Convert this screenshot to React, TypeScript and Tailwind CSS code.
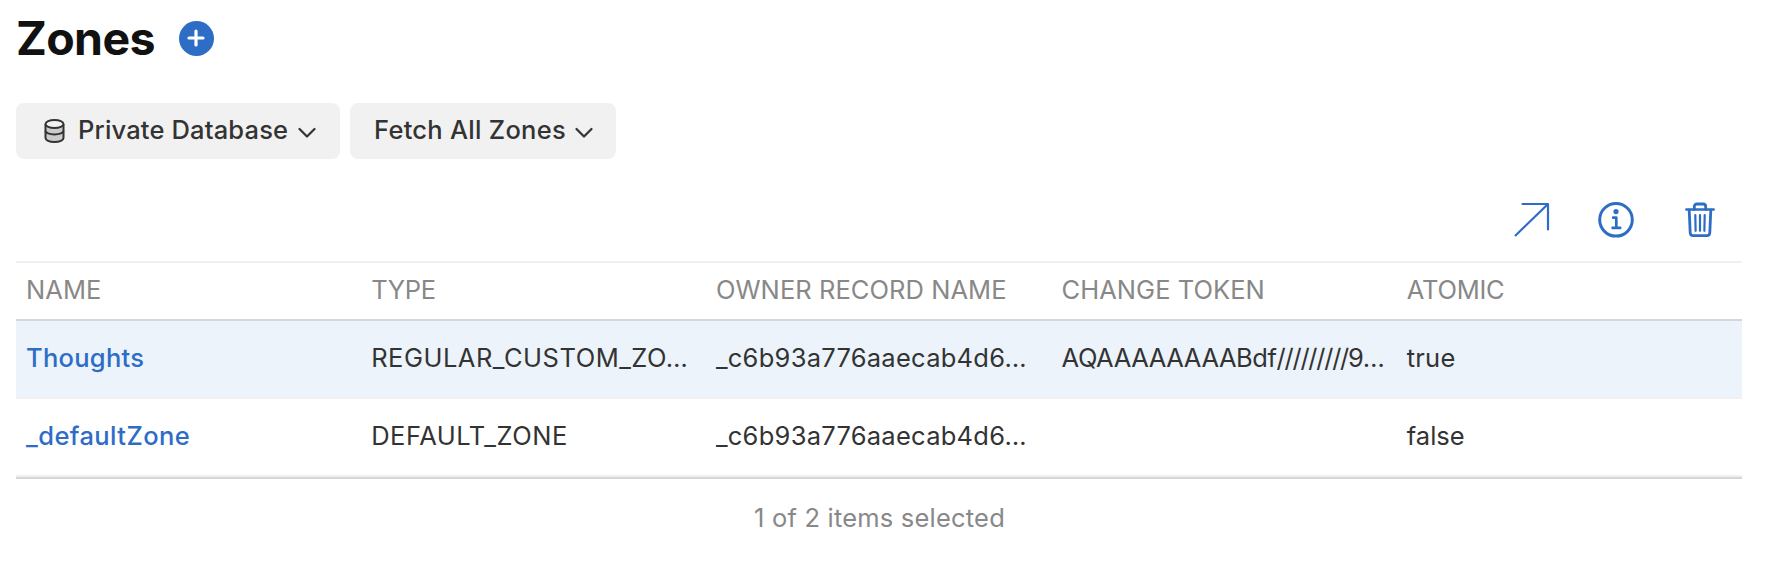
import type { ReactNode } from "react";

type Cell = { text: ReactNode; style: string };
type Zone = { name: Cell; cells: Cell[]; selected: boolean };

const columns: Cell[] = [
  { text: "NAME", style: "pl-[10px] tracking-[0.05px]" },
  { text: "TYPE", style: "pl-[10px] tracking-[-0.35px]" },
  { text: "OWNER RECORD NAME", style: "pl-[9.5px] tracking-[0.05px]" },
  { text: "CHANGE TOKEN", style: "pl-[10px] tracking-[0.03px]" },
  { text: "ATOMIC", style: "pl-[10px] tracking-[-0.25px]" },
];

const zones: Zone[] = [
  {
    name: { text: "Thoughts", style: "pl-[10px] tracking-[0.28px]" },
    selected: true,
    cells: [
      { text: "REGULAR_CUSTOM_ZO…", style: "pl-[10px] tracking-[0.5px]" },
      { text: "_c6b93a776aaecab4d6…", style: "pl-[9.5px] tracking-[0.26px]" },
      {
        text: (
          <>
            AQAAAAAAAABdf<span className="tracking-[-1.25px]">/////////</span>9…
          </>
        ),
        style: "pl-[10px] tracking-[-0.42px]",
      },
      { text: "true", style: "pl-[10px] tracking-[0.19px]" },
    ],
  },
  {
    name: { text: "_defaultZone", style: "pl-[10px] tracking-[0.42px]" },
    selected: false,
    cells: [
      { text: "DEFAULT_ZONE", style: "pl-[10px] tracking-[0.52px]" },
      { text: "_c6b93a776aaecab4d6…", style: "pl-[9.5px] tracking-[0.26px]" },
      { text: "", style: "" },
      { text: "false", style: "pl-[10px]" },
    ],
  },
];

function DatabaseIcon() {
  return (
    <svg width="21" height="24" viewBox="0 0 21 24" fill="none" stroke="#333" strokeWidth="2">
      <path d="M1.500 5v14c0 2.200 3.800 4 9 4s9-1.800 9-4V5" fill="#cbcbcb" />
      <ellipse cx="10.500" cy="5" rx="9" ry="4" fill="#f1f1f1" />
      <path d="M1.500 11.800c0 2 3.800 3.600 9 3.600s9-1.600 9-3.600" />
    </svg>
  );
}

function Chevron() {
  return (
    <svg width="18" height="12" viewBox="0 0 18 12" fill="none" stroke="#333" strokeWidth="2.200" strokeLinecap="round" strokeLinejoin="round">
      <path d="M1.500 2 9 9.500 16.500 2" />
    </svg>
  );
}

function ArrowIcon() {
  return (
    <svg width="36" height="36" viewBox="0 0 36 36" fill="none" stroke="#2d6dc6" strokeWidth="2.200">
      <path d="M8.500 2H34v25.500" strokeLinecap="round" strokeLinejoin="round" />
      <path d="M34 2 1 34" />
    </svg>
  );
}

function InfoIcon() {
  return (
    <svg width="36" height="36" viewBox="0 0 36 36" fill="none" stroke="#2d6dc6" strokeWidth="3">
      <circle cx="18" cy="17.800" r="16.300" />
      <circle cx="18" cy="9.600" r="2.600" fill="#2d6dc6" stroke="none" />
      <path d="M15.200 15.700h3.100v10.200M14.600 25.900h7.600" strokeWidth="2.700" strokeLinecap="round" strokeLinejoin="round" />
    </svg>
  );
}

function TrashIcon() {
  return (
    <svg width="32" height="36" viewBox="0 0 32 36" fill="none" stroke="#2d6dc6" strokeWidth="2.800" strokeLinecap="round" strokeLinejoin="round">
      <path d="M2.400 7.600h27.200" strokeWidth="2.500" />
      <path d="M10.300 7.500V4.700c0-1.700 1-2.700 2.700-2.700h6c1.700 0 2.700 1 2.700 2.700v2.800" />
      <path d="M5.200 8.200l1 22.600c.1 1.900 1.100 2.900 2.900 2.900h13.800c1.800 0 2.800-1 2.900-2.900l1-22.600" />
      <path d="M11.300 13l.3 15.800M16 13v15.800M20.700 13l-.3 15.800" strokeWidth="2.200" />
    </svg>
  );
}

function Dropdown({ className, children }: { className: string; children: ReactNode }) {
  return (
    <button className={`flex h-14 items-center rounded-lg bg-[#f1f1f1] font-medium leading-[53px] text-[#333] ${className}`}>
      {children}
    </button>
  );
}

export default function App() {
  return (
    <main className="h-[566px] overflow-hidden whitespace-nowrap bg-white pl-4 pr-[26px] font-[Inter,sans-serif] text-[25.5px] text-[#333]">
      <header className="flex h-[76px] items-center">
        <h1 className="w-[162.5px] text-[46.5px] font-bold leading-[76px] tracking-[-0.64px] text-[#111]">Zones</h1>
        <button aria-label="Add zone" className="flex size-[35px] items-center justify-center rounded-full bg-[#2d6dc6]">
          <svg width="18" height="18" viewBox="0 0 18 18" stroke="#fff" strokeWidth="3.200" strokeLinecap="round">
            <path d="M9 2v14M2 9h14" />
          </svg>
        </button>
      </header>

      <div className="mt-[27px] flex gap-[10px]">
        <Dropdown className="w-[324px] pl-7">
          <DatabaseIcon />
          <span className="ml-[13px] mr-[9px] h-14 w-[210.5px] text-left tracking-[0.17px]">Private Database</span>
          <span className="mt-1"><Chevron /></span>
        </Dropdown>
        <Dropdown className="w-[266px] pl-[24px]">
          <span className="mr-[9px] h-14 w-[192px] text-left tracking-[0.27px]">Fetch All Zones</span>
          <span className="mt-1"><Chevron /></span>
        </Dropdown>
      </div>

      <div className="flex h-[102px] items-start justify-end pr-[26px] pt-[43px] text-[#2d6dc6]">
        <button aria-label="Open" className="mr-[48px]"><ArrowIcon /></button>
        <button aria-label="Info" className="mr-[50px]"><InfoIcon /></button>
        <button aria-label="Delete"><TrashIcon /></button>
      </div>

      <section>
        <div className="grid h-[60px] grid-cols-5 border-y-2 border-t-[#f0f0f0] border-b-[#d6d6d6] leading-[54px] text-[#888]">
          {columns.map((c, i) => (
            <div key={i} className={c.style}>{c.text}</div>
          ))}
        </div>
        {zones.map((z, row) => (
          <div
            key={row}
            className={`grid h-[78px] grid-cols-5 border-b-2 border-[#f0f0f0] leading-[74px] ${z.selected ? "bg-[#ecf3fa]" : "bg-white"}`}
          >
            <a className={`font-medium text-[#2d6dc6] ${z.name.style}`}>{z.name.text}</a>
            {z.cells.map((c, i) => (
              <div key={i} className={c.style}>{c.text}</div>
            ))}
          </div>
        ))}
      </section>

      <footer className="border-t-2 border-[#d6d6d6] pl-[738px] leading-[77px] tracking-[0.2px] text-[#888]">
        1 of 2 items selected
      </footer>
    </main>
  );
}
